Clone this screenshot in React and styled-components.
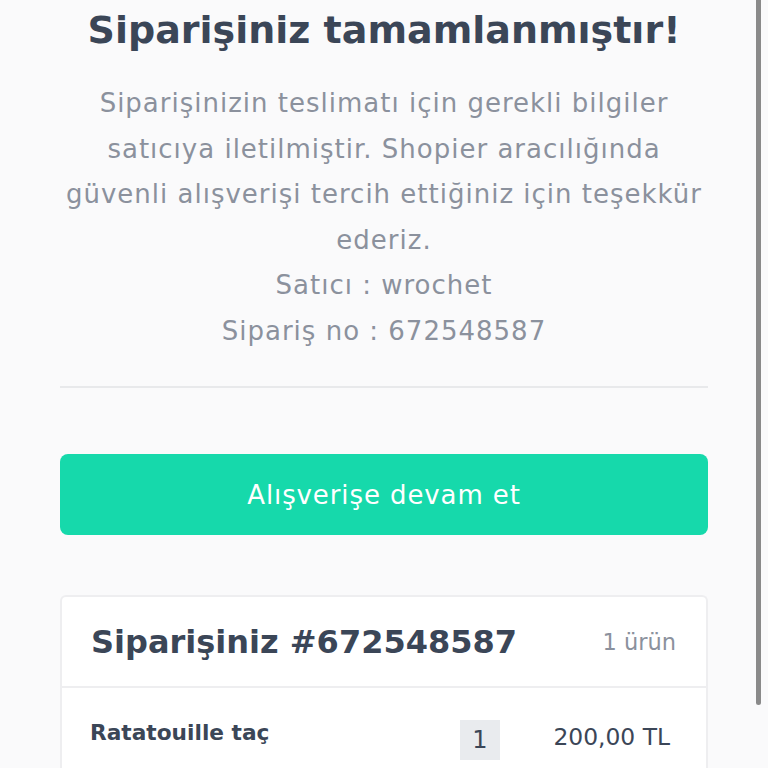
import React from "react";
import styled, { createGlobalStyle } from "styled-components";

const Global = createGlobalStyle`
  html, body { margin: 0; padding: 0; background: #fafafb; }
  body { font-family: "DejaVu Sans", "Open Sans", sans-serif; overflow: hidden; }
  * { box-sizing: border-box; }
`;

const Page = styled.main`
  width: 768px;
  height: 768px;
  padding: 0 60px;
  position: relative;
  overflow: hidden;
`;

const Title = styled.h1`
  margin: 0;
  height: 60px;
  line-height: 60px;
  font-size: 38px;
  font-weight: 700;
  color: #3b4657;
  text-align: center;
  white-space: nowrap;
`;

const Message = styled.div`
  margin-top: 21px;
  font-size: 26px;
  letter-spacing: 1px;
  line-height: 45.5px;
  font-weight: 400;
  color: #8b919d;
  text-align: center;
`;

const Line = styled.p`
  margin: 0;
`;

const Divider = styled.hr`
  margin: 32px 0 0;
  border: none;
  height: 2px;
  background: #e8e9eb;
`;

const Button = styled.button`
  display: flex;
  align-items: center;
  justify-content: center;
  width: 100%;
  height: 81px;
  margin-top: 66px;
  border: none;
  border-radius: 8px;
  background: #16d9ab;
  color: #ffffff;
  font-family: inherit;
  font-size: 26px;
  letter-spacing: 0.9px;
  font-weight: 400;
`;

const Card = styled.section`
  margin-top: 60px;
  background: #ffffff;
  border: 2px solid #eeeef0;
  border-bottom: none;
  border-radius: 6px 6px 0 0;
`;

const CardHeader = styled.header`
  display: flex;
  align-items: center;
  justify-content: space-between;
  height: 91px;
  padding: 0 30px 0 29px;
  border-bottom: 2px solid #eeeef0;
`;

const CardTitle = styled.h2`
  margin: 0;
  font-size: 32px;
  font-weight: 700;
  color: #3b4657;
`;

const Count = styled.span`
  font-size: 22.5px;
  color: #8b919d;
`;

const ItemRow = styled.div`
  display: flex;
  align-items: center;
  height: 120px;
  padding: 0 36px 16px 28px;
`;

const ItemName = styled.span`
  flex: 1;
  font-size: 21.7px;
  font-weight: 700;
  color: #3b4657;
  margin-top: -16px;
`;

const Qty = styled.span`
  display: flex;
  align-items: center;
  justify-content: center;
  width: 40px;
  height: 40px;
  background: #e9ebee;
  color: #3b4657;
  font-size: 24px;
  font-weight: 400;
`;

const Price = styled.span`
  width: 170px;
  text-align: right;
  font-size: 23.4px;
  font-weight: 400;
  color: #3b4657;
  margin-top: -6px;
`;

const ScrollThumb = styled.div`
  position: absolute;
  top: -10px;
  right: 7px;
  width: 5px;
  height: 715px;
  border-radius: 3px;
  background: #8a8a8a;
`;

export default function App() {
  return (
    <>
      <Global />
      <Page>
        <Title>Siparişiniz tamamlanmıştır!</Title>
        <Message>
          <Line>
            Siparişinizin teslimatı için gerekli bilgiler satıcıya iletilmiştir. Shopier aracılığında güvenli alışverişi tercih ettiğiniz için teşekkür ederiz.
          </Line>
          <Line>Satıcı : wrochet</Line>
          <Line>Sipariş no : 672548587</Line>
        </Message>
        <Divider />
        <Button>Alışverişe devam et</Button>
        <Card>
          <CardHeader>
            <CardTitle>Siparişiniz #672548587</CardTitle>
            <Count>1 ürün</Count>
          </CardHeader>
          <ItemRow>
            <ItemName>Ratatouille taç</ItemName>
            <Qty>1</Qty>
            <Price>200,00 TL</Price>
          </ItemRow>
        </Card>
        <ScrollThumb />
      </Page>
    </>
  );
}
